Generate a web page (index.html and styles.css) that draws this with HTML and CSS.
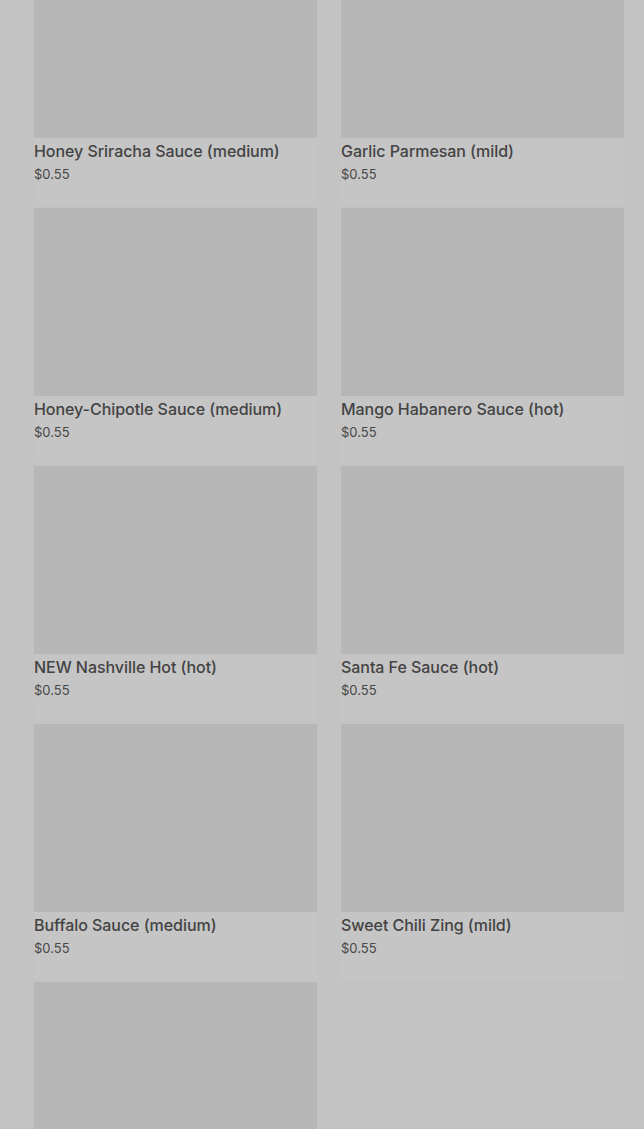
FILE: index.html
```html
<!DOCTYPE html>
<html lang="en">
<head>
<meta charset="utf-8">
<title>Sauces</title>
<link rel="stylesheet" href="styles.css">
</head>
<body>
<div class="grid">
  <div class="card"><div class="img"></div><div class="title">Honey Sriracha Sauce (medium)</div><div class="price">$0.55</div></div>
  <div class="card"><div class="img"></div><div class="title">Garlic Parmesan (mild)</div><div class="price">$0.55</div></div>
  <div class="card"><div class="img"></div><div class="title">Honey-Chipotle Sauce (medium)</div><div class="price">$0.55</div></div>
  <div class="card"><div class="img"></div><div class="title">Mango Habanero Sauce (hot)</div><div class="price">$0.55</div></div>
  <div class="card"><div class="img"></div><div class="title">NEW Nashville Hot (hot)</div><div class="price">$0.55</div></div>
  <div class="card"><div class="img"></div><div class="title">Santa Fe Sauce (hot)</div><div class="price">$0.55</div></div>
  <div class="card"><div class="img"></div><div class="title">Buffalo Sauce (medium)</div><div class="price">$0.55</div></div>
  <div class="card"><div class="img"></div><div class="title">Sweet Chili Zing (mild)</div><div class="price">$0.55</div></div>
  <div class="card"><div class="img"></div><div class="title">&nbsp;</div><div class="price">&nbsp;</div></div>
</div>
</body>
</html>
```
FILE: styles.css
```css
html, body {
  margin: 0;
  padding: 0;
  background: #c3c3c3;
  height: 1129px;
  overflow: hidden;
}
body {
  font-family: Inter, "Noto Sans", sans-serif;
  color: #434343;
}
.grid {
  display: grid;
  grid-template-columns: 1fr 1fr;
  column-gap: 24px;
  row-gap: 3px;
  padding: 0 20px 0 34px;
  margin-top: -50px;
}
.card {
  background: #c5c5c5;
  padding-bottom: 21px;
}
.img {
  height: 188px;
  background: #b7b7b7;
}
.title {
  font-size: 16px;
  line-height: 24px;
  padding-top: 1px;
  font-weight: 500;
  letter-spacing: -0.05px;
}
.price {
  font-size: 13px;
  line-height: 20px;
  padding-top: 1px;
  font-weight: 400;
  color: #474747;
}
```
